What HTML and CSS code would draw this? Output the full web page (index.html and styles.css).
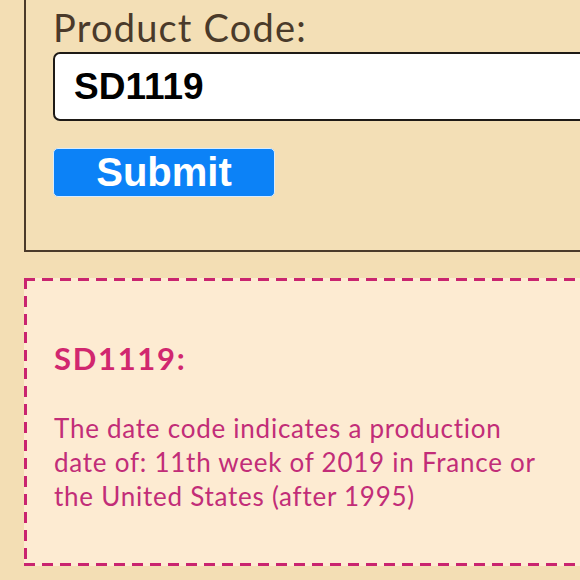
FILE: index.html
```html
<!DOCTYPE html>
<html>

<head>
  <meta charset="UTF-8">
  <meta name="viewport" content="width=device-width, initial-scale=1.0">
  <title>Date Code Lookup</title>
  <link rel="stylesheet" href="styles.css">
</head>

<body>

  <div class="page">
    <form class="lookup" onsubmit="return false;">
      <label class="label" for="code">Product Code:</label>
      <input class="code-input" id="code" type="text" value="SD1119">
      <button class="button" type="submit">Submit</button>
    </form>

    <div class="result">
      <h2 class="result-title">SD1119:</h2>
      <p class="result-text">The date code indicates a production date of: 11th week of 2019 in France or the United States (after 1995)</p>
    </div>
  </div>

</body>

</html>
```

FILE: styles.css
```css
html,
body {
  margin: 0;
  height: 100%;
  overflow: hidden;
}

body {
  background-color: #f3deb4;
  font-family: Lato, "Open Sans", sans-serif;
}

.page {
  padding-left: 24px;
}

.lookup {
  display: flex;
  flex-direction: column;
  align-items: flex-start;
  margin-top: -36px;
  margin-right: -120px;
  padding: 40px 0 53px 27px;
  border: 2px solid #4a3a2a;
  background-color: #f3dfb6;
}

.label {
  font-size: 38px;
  line-height: 50px;
  margin-top: -4px;
  letter-spacing: 1.2px;
  color: #4a3a2a;
}

.code-input {
  box-sizing: border-box;
  width: 640px;
  height: 69px;
  margin: 0;
  padding: 0 19px;
  border: 2px solid #1e1a16;
  border-radius: 7px;
  background-color: #fff;
  font-family: "Liberation Sans", Arial, sans-serif;
  font-weight: bold;
  font-size: 37px;
  color: #000;
}

.button {
  box-sizing: border-box;
  width: 222px;
  height: 49px;
  margin-top: 27px;
  padding: 0;
  border: 1px solid #d8ecff;
  border-radius: 5px;
  background-color: #0c82f7;
  font-family: "Liberation Sans", Arial, sans-serif;
  font-weight: bold;
  font-size: 40px;
  line-height: 45px;
  color: #fff;
}

/* dashed frame drawn with gradients to get the longer dashes */
.result {
  margin-top: 26px;
  margin-right: -120px;
  height: 288px;
  box-sizing: border-box;
  padding: 61px 0 0 30px;
  background:
    linear-gradient(90deg, #c9246f 11px, transparent 0) top left / 18px 3px repeat-x,
    linear-gradient(90deg, #c9246f 11px, transparent 0) bottom left / 18px 3px repeat-x,
    linear-gradient(180deg, #c9246f 11px, transparent 0) top left / 3px 18px repeat-y,
    linear-gradient(180deg, #c9246f 11px, transparent 0) top right / 3px 18px repeat-y,
    #fdebd2;
}

.result-title {
  margin: 0;
  font-size: 31px;
  font-weight: bold;
  letter-spacing: 1.7px;
  color: #d1276f;
}

.result-text {
  width: 490px;
  margin: 34px 0 0;
  font-size: 26px;
  line-height: 34px;
  letter-spacing: 0.75px;
  color: #c22d78;
}
```
